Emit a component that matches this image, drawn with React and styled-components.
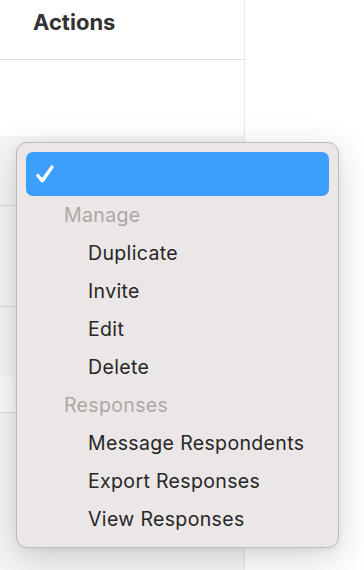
import React from "react";
import styled, { createGlobalStyle } from "styled-components";

const Global = createGlobalStyle`
  html, body { margin: 0; padding: 0; background: #ffffff; }
  body { font-family: Inter, "Liberation Sans", sans-serif; overflow: hidden; }
  #root { height: 570px; }
`;

const Page = styled.div`
  position: relative;
  width: 364px;
  height: 570px;
  overflow: hidden;
  background: #ffffff;
`;

const Column = styled.div`
  width: 245px;
  height: 570px;
  box-sizing: border-box;
  border-right: 1px solid #e8e8e8;
  display: flex;
  flex-direction: column;
  overflow: hidden;
`;

const HeaderCell = styled.div`
  height: 60px;
  flex-shrink: 0;
  box-sizing: border-box;
  padding: 8px 0 0 33px;
  border-bottom: 1px solid #dedede;
  font-size: 22px;
  line-height: 28px;
  font-weight: 650;
  color: #333333;
`;

const Row = styled.div`
  height: ${(p) => p.$h}px;
  box-sizing: border-box;
  background: ${(p) => p.$bg};
  border-bottom: ${(p) => (p.$line ? "1px solid #d9d9d9" : "none")};
  flex-shrink: 0;
`;

const Menu = styled.div`
  position: absolute;
  left: 16px;
  top: 142px;
  width: 323px;
  box-sizing: border-box;
  padding: 9px;
  background: #ebe7e6;
  border: 1px solid #bebbba;
  border-radius: 11px;
  box-shadow: 0 10px 36px rgba(0, 0, 0, 0.17), 0 2px 6px rgba(0, 0, 0, 0.06);
  display: flex;
  flex-direction: column;
`;

const Selected = styled.div`
  height: 44px;
  border-radius: 7px;
  background: #3d9ffc;
  display: flex;
  align-items: center;
  padding-left: 9px;
`;

const SectionLabel = styled.div`
  height: 38px;
  line-height: 38px;
  padding-left: 38px;
  font-size: 19.5px;
  color: #aba7a6;
  letter-spacing: 0.35px;
`;

const Item = styled.div`
  height: 38px;
  line-height: 38px;
  padding-left: 62px;
  font-size: 19.5px;
  color: #262626;
  letter-spacing: 0.35px;
`;

const Check = () => (
  <svg width="20" height="20" viewBox="0 0 20 20" fill="none">
    <path
      d="M2.8 11.5 L7.3 16.8 L17 3"
      stroke="#ffffff"
      strokeWidth="3.4"
      strokeLinecap="round"
      strokeLinejoin="round"
    />
  </svg>
);

const sections = [
  { label: "Manage", items: ["Duplicate", "Invite", "Edit", "Delete"] },
  {
    label: "Responses",
    items: ["Message Respondents", "Export Responses", "View Responses"],
  },
];

export default function App() {
  return (
    <Page>
      <Global />
      <Column>
        <HeaderCell>Actions</HeaderCell>
        <Row $h={76} $bg="#ffffff" />
        <Row $h={70} $bg="#f5f5f5" $line />
        <Row $h={101} $bg="#f5f5f5" $line />
        <Row $h={70} $bg="#f5f5f5" />
        <Row $h={36} $bg="#fafafa" $line />
        <Row $h={200} $bg="#f5f5f5" />
      </Column>
      <Menu>
        <Selected>
          <Check />
        </Selected>
        {sections.map((s) => (
          <React.Fragment key={s.label}>
            <SectionLabel>{s.label}</SectionLabel>
            {s.items.map((it) => (
              <Item key={it}>{it}</Item>
            ))}
          </React.Fragment>
        ))}
      </Menu>
    </Page>
  );
}
